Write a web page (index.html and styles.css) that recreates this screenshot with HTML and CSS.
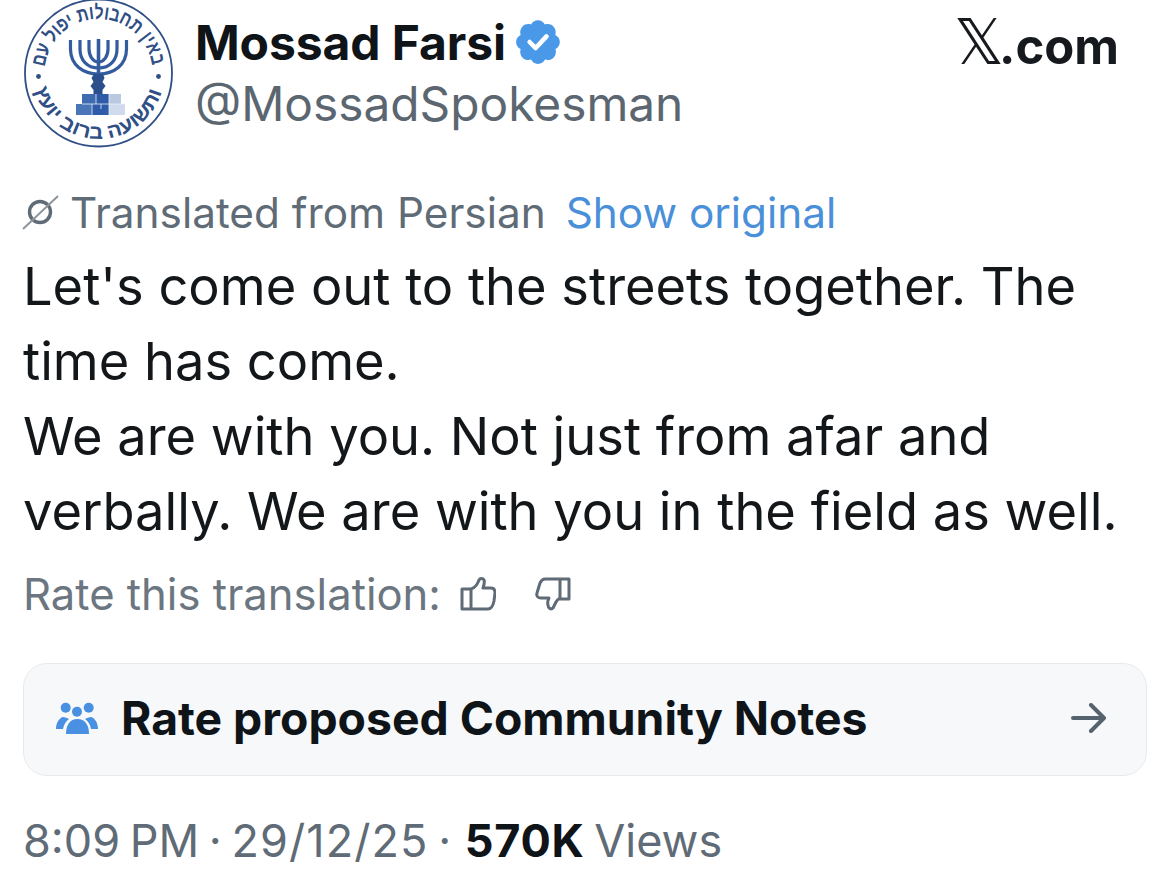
FILE: index.html
```html
<!DOCTYPE html>
<html lang="en">
<head>
<meta charset="utf-8">
<title>Mossad Farsi</title>
<link rel="stylesheet" href="styles.css">
</head>
<body>
<main class="post">
  <header class="head">
    <svg class="logo" viewBox="0 0 152 152" width="152" height="152" aria-hidden="true">
      <circle cx="75.500" cy="76" r="73.500" fill="#fff" stroke="#2f4f86" stroke-width="1.800"/>
      <defs>
        <path id="arcTop" d="M21.830 70 A54 54 0 0 1 129.170 70"/>
        <path id="arcBottom" d="M11.500 92 A66 66 0 0 0 139.500 92"/>
      </defs>
      <text class="seal"><textPath href="#arcTop" textLength="156" lengthAdjust="spacingAndGlyphs">באין תחבולות יפול עם</textPath></text>
      <text class="seal"><textPath href="#arcBottom" textLength="172" lengthAdjust="spacingAndGlyphs">ותשועה ברוב יועץ</textPath></text>
      <circle cx="15.500" cy="79.500" r="2.400" fill="#2f4f86"/>
      <circle cx="135.500" cy="79.500" r="2.400" fill="#2f4f86"/>
      <g fill="none" stroke="#335c9e" stroke-width="3.200">
        <path d="M47.500 43V52C47.500 68 60 77 75.500 77S103.500 68 103.500 52V43"/>
        <path d="M57 43V52C57 63 64 71 75.500 71S94 63 94 52V43"/>
        <path d="M66 43V52C66 59 70 65 75.500 65S85 59 85 52V43"/>
        <path d="M75.500 42V80" stroke-width="3.600"/>
      </g>
      <path fill="#2b4f8c" d="M71 77h9l1.500 4-2 4 3 4-3 4v4.500h-9V93l-3-4 3-4-2-4z"/>
      <rect x="59" y="97" width="14" height="10" fill="#3f6cb0"/>
      <rect x="73" y="97" width="13" height="10" fill="#2f5ca8"/>
      <rect x="86" y="97" width="12" height="10" fill="#b9c9e2"/>
      <rect x="53" y="107" width="16" height="11" fill="#4a76b8"/>
      <rect x="69" y="107" width="17" height="11" fill="#2f5ca8"/>
      <rect x="86" y="107" width="16" height="11" fill="#cfdbec"/>
      <path d="M59 107h43M73 97v10M86 97v21M69 107v11M78 107v5" stroke="#e8eef7" stroke-width="0.800" fill="none"/>
    </svg>
    <div class="who">
      <div class="name-row">
        <span class="name">Mossad Farsi</span>
        <svg class="badge" viewBox="0 0 24 24" width="50" height="50" aria-hidden="true"><path fill="#4a98e8" d="M22 12c0-1.500-.9-2.800-2.200-3.400.5-1.400.2-3-.9-4.100s-2.700-1.400-4.100-.9C14.200 2.300 13 1.500 11.500 1.500S8.800 2.300 8.200 3.600c-1.400-.5-3-.2-4.100.9S2.700 7.200 3.200 8.600C1.900 9.200 1 10.500 1 12s.9 2.800 2.200 3.400c-.5 1.400-.2 3 .9 4.100s2.700 1.400 4.100.9c.6 1.300 1.800 2.100 3.300 2.100s2.800-.8 3.400-2.100c1.400.5 3 .2 4.100-.9s1.400-2.700.9-4.100C21.100 14.800 22 13.500 22 12z"/><path fill="none" stroke="#fff" stroke-width="2.200" stroke-linecap="round" stroke-linejoin="round" d="M7.500 12l2.900 2.900 5.200-5.600"/></svg>
      </div>
      <div class="handle">@MossadSpokesman</div>
    </div>
    <div class="site"><span class="xmark">𝕏</span>.com</div>
  </header>

  <div class="translate">
    <svg class="globe" viewBox="0 0 40 40" width="40" height="40" aria-hidden="true"><circle cx="20" cy="20" r="10.500" fill="none" stroke="#5f6b76" stroke-width="3.400"/><path d="M3 37 38 4" stroke="#8d969e" stroke-width="2"/></svg>
    <span>Translated from Persian</span>
    <span class="show">Show original</span>
  </div>

  <p class="body">Let's come out to the streets together. The<br>time has come.<br>We are with you. Not just from afar and<br>verbally. We are with you in the field as well.</p>

  <div class="rate">
    <span>Rate this translation:</span>
    <svg class="thumb" viewBox="0 0 36 34" width="36" height="34" aria-hidden="true"><path fill="none" stroke="#5f6b76" stroke-width="3" stroke-linejoin="round" d="M2 12h9v20H2zM11 12c4-1 7-6 8-9 1-2 4-2 5 0 1 2 0 5-1 8h8c3 0 4 2 4 5l-1 8c-1 5-3 8-6 8H11"/></svg>
    <svg class="thumb thumb-down" viewBox="0 0 36 34" width="36" height="34" aria-hidden="true"><path fill="none" stroke="#5f6b76" stroke-width="3" stroke-linejoin="round" d="M34 2h-9v20h9zM25 2H10C7 2 6 4 5 6L2 16c-1 3 1 5 4 5h8c-1 2-2 4-1 7 0 3 3 5 5 3l3-6c1-2 2-3 4-4"/></svg>
  </div>

  <div class="notes">
    <svg class="people" viewBox="0 0 42 32" width="42" height="32" aria-hidden="true"><g fill="#4a90e2"><circle cx="9.700" cy="5.700" r="5"/><circle cx="32.700" cy="5.700" r="5"/><circle cx="21" cy="9.800" r="5"/><path d="M10 32c0-9 4-15 11.500-15S33 23 33 32z"/><path d="M0 27c0-6 3-11 7-12 2 0 4 1 6 2-3 2-5 5-6 10zM42 27c0-6-3-11-7-12-2 0-4 1-6 2 3 2 5 5 6 10z"/></g></svg>
    <span class="notes-label">Rate proposed Community Notes</span>
    <svg class="arrow" viewBox="0 0 36 30" width="36" height="30" aria-hidden="true"><path fill="none" stroke="#56626e" stroke-width="4" stroke-linecap="round" stroke-linejoin="round" d="M2 15h31M20 2l13 13-13 13"/></svg>
  </div>

  <div class="meta"><span>8:09 PM · </span><span class="date">29/12/25</span><span> · </span><strong>570K</strong><span> Views</span></div>
</main>
</body>
</html>
```
FILE: styles.css
```css
* { box-sizing: border-box; }
html, body { margin: 0; background: #fff; }
body { width: 1170px; height: 894px; overflow: hidden; font-family: Inter, "Liberation Sans", sans-serif; color: #0f1419; }
.post { display: flex; flex-direction: column; padding: 0 23px; }
.head { display: flex; align-items: flex-start; }
.logo { flex: none; margin-top: -3px; margin-right: 20px; }
.seal { font-family: "Liberation Sans", sans-serif; font-size: 20px; fill: #2f4f86; font-weight: 700; }
.who { flex: 1; padding-top: 13px; }
.name-row { display: flex; align-items: center; gap: 8px; height: 58px; }
.name { font-size: 48px; font-weight: 700; letter-spacing: -0.1px; }
.handle { font-size: 47.800px; color: #5b6670; line-height: 62px; margin-top: 2px; }
.site { font-size: 49px; font-weight: 700; color: #16191d; padding: 14px 28px 0 0; line-height: 58px; }
.xmark { font-family: "DejaVu Sans", sans-serif; font-weight: 400; font-size: 62px; line-height: 58px; margin-right: -5px; }
.translate { display: flex; align-items: center; margin-top: 38px; height: 50px; font-size: 42.300px; color: #5f6b76; }
.globe { flex: none; margin-left: -3px; margin-right: 10px; }
.show { color: #4a90d9; margin-left: 20px; }
.body { margin: 12px 0 0; font-size: 52.400px; line-height: 75px; color: #14171a; }
.rate { display: flex; align-items: center; margin-top: 20px; height: 50px; font-size: 43.600px; color: #6b7680; }
.thumb { flex: none; margin-left: 19px; }
.thumb-down { margin-left: 39px; }
.notes { display: flex; align-items: center; margin-top: 44px; height: 113px; background: #f7f8f9; border: 1px solid #e8eaec; border-radius: 24px; padding: 0 39px 3px 32px; }
.people { flex: none; margin-right: 23px; }
.notes-label { flex: 1; font-size: 46.300px; font-weight: 700; color: #0f1419; }
.arrow { flex: none; }
.meta { margin-top: 39px; font-size: 45px; color: #5f6b76; white-space: pre; line-height: 52px; word-spacing: -3px; }
.date { letter-spacing: 1.100px; }
.meta strong { color: #0f1419; font-weight: 700; letter-spacing: 0.700px; margin-left: 4px; }
```
